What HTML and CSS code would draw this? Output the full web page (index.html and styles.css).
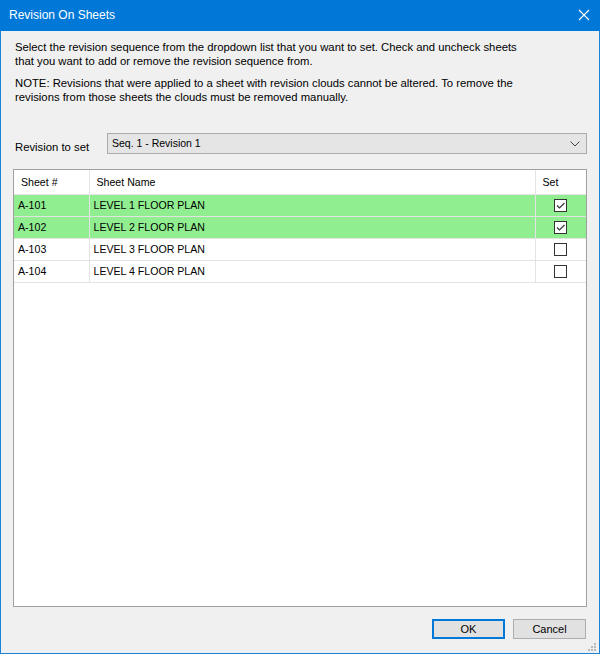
FILE: index.html
```html
<!DOCTYPE html>
<html>
<head>
<meta charset="utf-8">
<link rel="stylesheet" href="styles.css">
</head>
<body>
<div class="window">
  <div class="titlebar">
    <span class="title">Revision On Sheets</span>
    <svg class="close" width="12" height="12" viewBox="0 0 12 12"><path d="M1 1 L11 11 M11 1 L1 11" stroke="#fff" stroke-width="1.1" fill="none"/></svg>
  </div>
  <div class="content">
    <p class="intro">Select the revision sequence from the dropdown list that you want to set. Check and uncheck sheets<br>that you want to add or remove the revision sequence from.</p>
    <p class="intro note">NOTE: Revisions that were applied to a sheet with revision clouds cannot be altered. To remove the<br>revisions from those sheets the clouds must be removed manually.</p>
    <div class="rev-row">
      <span class="rev-label">Revision to set</span>
      <div class="combo">
        <span class="combo-text">Seq. 1 - Revision 1</span>
        <svg class="chev" width="10" height="6" viewBox="0 0 10 6"><path d="M0.5 0.5 L5 5 L9.5 0.5" stroke="#444" stroke-width="1" fill="none"/></svg>
      </div>
    </div>
    <div class="grid">
      <table>
        <thead>
          <tr><th class="c1">Sheet #</th><th class="c2">Sheet Name</th><th class="c3">Set</th></tr>
        </thead>
        <tbody>
          <tr class="on"><td class="c1">A-101</td><td class="c2">LEVEL 1 FLOOR PLAN</td><td class="c3"><span class="cb"><svg width="11" height="11" viewBox="0 0 11 11"><path d="M2 5.5 L4.5 8 L9.5 3" stroke="#333" stroke-width="1.2" fill="none"/></svg></span></td></tr>
          <tr class="on"><td class="c1">A-102</td><td class="c2">LEVEL 2 FLOOR PLAN</td><td class="c3"><span class="cb"><svg width="11" height="11" viewBox="0 0 11 11"><path d="M2 5.5 L4.5 8 L9.5 3" stroke="#333" stroke-width="1.2" fill="none"/></svg></span></td></tr>
          <tr><td class="c1">A-103</td><td class="c2">LEVEL 3 FLOOR PLAN</td><td class="c3"><span class="cb"></span></td></tr>
          <tr><td class="c1">A-104</td><td class="c2">LEVEL 4 FLOOR PLAN</td><td class="c3"><span class="cb"></span></td></tr>
        </tbody>
      </table>
    </div>
    <div class="footer">
      <button class="btn ok">OK</button>
      <button class="btn">Cancel</button>
    </div>
  </div>
  <svg class="grip" width="9" height="9" viewBox="0 0 9 9">
    <rect x="6" y="0" width="2" height="2" fill="#b8b8b8"/>
    <rect x="3" y="3" width="2" height="2" fill="#b8b8b8"/>
    <rect x="6" y="3" width="2" height="2" fill="#b8b8b8"/>
    <rect x="0" y="6" width="2" height="2" fill="#b8b8b8"/>
    <rect x="3" y="6" width="2" height="2" fill="#b8b8b8"/>
    <rect x="6" y="6" width="2" height="2" fill="#b8b8b8"/>
  </svg>
</div>
</body>
</html>
```

FILE: styles.css
```css
* { box-sizing: border-box; }
html, body { margin: 0; padding: 0; }
body {
  font-family: "Liberation Sans", Arial, sans-serif;
  font-size: 11px;
  color: #000;
  background: #f0f0f0;
}
.window {
  position: relative;
  width: 600px;
  height: 654px;
  border: 1px solid #1883d7;
  border-top: none;
  background: #f0f0f0;
  display: flex;
  flex-direction: column;
}
.titlebar {
  height: 31px;
  margin: 0 -1px;
  background: #0078d7;
  display: flex;
  align-items: center;
  justify-content: space-between;
  padding: 0 10px 2px 9px;
}
.title {
  color: #fff;
  font-size: 12px;
  font-family: "Liberation Sans", "Segoe UI", sans-serif;
}
.close { display: block; }
.content {
  flex: 1;
  display: flex;
  flex-direction: column;
  padding: 9px 12px 14px 12px;
}
.intro {
  margin: 0 0 0 2px;
  line-height: 14px;
  font-size: 11.3px;
}
.note { margin-top: 8px; }
.rev-row {
  display: flex;
  align-items: center;
  margin-top: 29px;
  height: 21px;
}
.rev-label {
  width: 92px;
  margin-left: 2px;
  padding-top: 7px;
  font-size: 11.3px;
}
.combo {
  flex: 1;
  height: 21px;
  background: #e5e5e5;
  border: 1px solid #acacac;
  display: flex;
  align-items: center;
  justify-content: space-between;
  padding: 0 6px 1px 4px;
  font-size: 10.5px;
}
.combo-text { padding-bottom: 1px; }
.chev { display: block; margin-top: 1px; }
.grid {
  flex: 1;
  margin-top: 15px;
  background: #fff;
  border: 1px solid #a0a0a0;
}
table {
  width: 100%;
  border-collapse: collapse;
  table-layout: fixed;
  font-size: 10.6px;
}
th, td {
  font-weight: normal;
  text-align: left;
  padding: 0;
  border-bottom: 1px solid #e3e3e3;
  white-space: nowrap;
}
th { height: 24px; padding-top: 1px; }
td { height: 22px; }
.c1 { width: 75px; border-right: 1px solid #e3e3e3; }
.c3 { width: 51px; border-left: 1px solid #e3e3e3; }
th.c1 { padding-left: 7px; }
th.c2 { padding-left: 7px; }
th.c3 { padding-left: 7px; }
td.c1 { padding-left: 4px; }
td.c2 { padding-left: 4px; }
td.c3 { text-align: center; }
tr.on td { background: #90ee90; }
.cb {
  display: inline-block;
  width: 13px;
  height: 13px;
  border: 1px solid #333;
  background: #fff;
  vertical-align: middle;
  margin-top: 1px;
  margin-right: 0;
}
.cb svg { display: block; margin: 0; }
.footer {
  display: flex;
  justify-content: flex-end;
  gap: 8px;
  margin-top: 12px;
  padding-right: 1px;
}
.btn {
  width: 73px;
  height: 20px;
  font-family: "Liberation Sans", Arial, sans-serif;
  font-size: 11px;
  color: #000;
  background: #e1e1e1;
  border: 1px solid #adadad;
  padding: 0 0 1px;
}
.btn.ok { border: 2px solid #0078d7; }
.grip {
  position: absolute;
  right: 2px;
  bottom: 1px;
}
```
